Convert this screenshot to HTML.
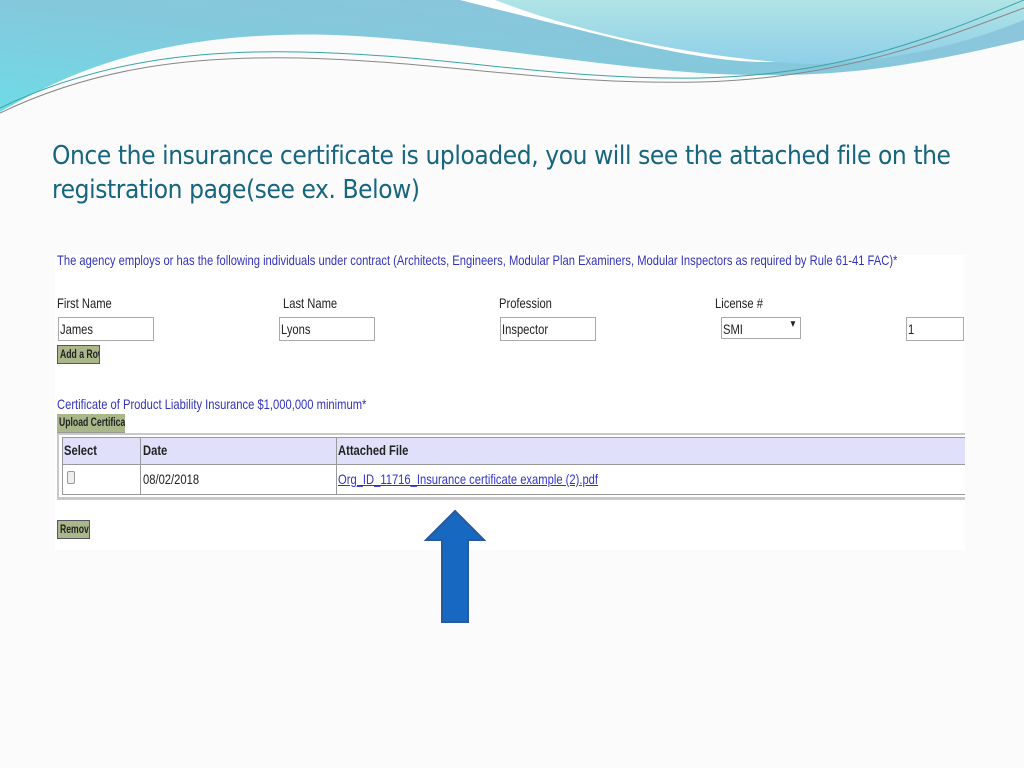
<!DOCTYPE html>
<html><head><style>
body{margin:0;width:1024px;height:768px;background:#fbfbfb;position:relative;overflow:hidden;font-family:"Liberation Sans",sans-serif}
.t{position:absolute;left:52px;top:139px;font-size:26px;line-height:34px;color:#17657f;font-family:"DejaVu Sans Condensed","Liberation Sans",sans-serif;letter-spacing:-0.4px;white-space:nowrap}
.shot{position:absolute;left:55px;top:255px;width:910px;height:295px;background:#fff;overflow:hidden}
.a{position:absolute;font-size:13px;color:#222;transform:scaleX(.8);transform-origin:left top;white-space:nowrap}
.inp{position:absolute;border:1px solid #aaa;height:22px;background:#fff}
.btn{position:absolute;background:#a9b78a;border:1px solid #556;font-size:12px;font-weight:bold;color:#222;padding:0 2px;white-space:nowrap;overflow:hidden;box-sizing:border-box;line-height:16px}
.btn span{display:inline-block;transform:scaleX(.72);transform-origin:left}
</style></head><body>
<svg width="1024" height="120" style="position:absolute;left:0;top:0">
<defs><linearGradient id="g" x1="0" y1="1" x2="1" y2="0"><stop offset="0" stop-color="#6fdbe6"/><stop offset=".5" stop-color="#84c8dc"/><stop offset="1" stop-color="#8fc4dc"/></linearGradient>
<linearGradient id="h" x1="0" y1="0" x2="0" y2="1"><stop offset="0" stop-color="#b0e4e6"/><stop offset="1" stop-color="#8fcfe8"/></linearGradient></defs>
<path d="M0 0H1024V40C900 70 820 80 700 73C550 62 400 30 280 35C120 40 40 90 0 112Z" fill="url(#g)"/>
<path d="M460 0H1024V10C930 45 860 62 760 62C690 60 620 40 460 0Z" fill="#fff"/>
<path d="M495 0H1024V20C950 50 880 62 810 64C720 60 600 40 495 0Z" fill="url(#h)"/>
<path d="M0 108C100 60 200 50 300 52C450 55 550 80 700 78C850 75 950 30 1024 0" stroke="#3aa5a5" fill="none" stroke-width="1"/>
<path d="M0 113C100 65 200 56 300 58C450 62 550 85 700 82C850 78 950 35 1024 8" stroke="#888" fill="none" stroke-width="1"/>
</svg>
<div class="t">Once the insurance certificate is uploaded, you will see the attached file on the<br>registration page(see ex. Below)</div>
<div class="shot">
<div class="a" style="left:2px;top:-3px;color:#3333bb;font-size:14px">The agency employs or has the following individuals under contract (Architects, Engineers, Modular Plan Examiners, Modular Inspectors as required by Rule 61-41 FAC)*</div>
<div class="a" style="left:2px;top:40px;font-size:14px">First Name</div>
<div class="a" style="left:228px;top:40px;font-size:14px">Last Name</div>
<div class="a" style="left:444px;top:40px;font-size:14px">Profession</div>
<div class="a" style="left:660px;top:40px;font-size:14px">License #</div>
<div class="inp" style="left:3px;top:62px;width:94px"></div><div class="a" style="left:5px;top:66px;font-size:14px">James</div>
<div class="inp" style="left:224px;top:62px;width:94px"></div><div class="a" style="left:226px;top:66px;font-size:14px">Lyons</div>
<div class="inp" style="left:445px;top:62px;width:94px"></div><div class="a" style="left:447px;top:66px;font-size:14px">Inspector</div>
<div class="inp" style="left:666px;top:62px;width:78px;height:20px"></div><div class="a" style="left:668px;top:66px;font-size:14px">SMI</div><div class="a" style="left:734px;top:64px;font-size:10px">▼</div>
<div class="inp" style="left:851px;top:62px;width:56px"></div><div class="a" style="left:853px;top:66px;font-size:14px">1</div>
<div class="btn" style="left:2px;top:90px;width:43px;height:19px"><span>Add a Row</span></div>
<div class="a" style="left:2px;top:141px;color:#3333bb;font-size:14px">Certificate of Product Liability Insurance $1,000,000 minimum*</div>
<div class="btn" style="left:2px;top:159px;width:68px;height:19px;border:none;border-bottom:1px solid #999"><span>Upload Certificate</span></div>
<div style="position:absolute;left:2px;top:178px;width:908px;height:62px;border:2px solid #c8c8c8;border-right:none;border-bottom:3px solid #c8c8c8"></div>
<div style="position:absolute;left:7px;top:182px;width:903px;height:56px;border:1px solid #999;border-right:none">
<div style="height:26px;background:#e0e0fb;border-bottom:1px solid #999"></div>
<div style="position:absolute;left:77px;top:0;width:1px;height:56px;background:#999"></div>
<div style="position:absolute;left:273px;top:0;width:1px;height:56px;background:#999"></div>
</div>
<div class="a" style="left:9px;top:187px;font-weight:bold;font-size:14px">Select</div>
<div class="a" style="left:88px;top:187px;font-weight:bold;font-size:14px">Date</div>
<div class="a" style="left:283px;top:187px;font-weight:bold;font-size:14px">Attached File</div>
<div style="position:absolute;left:12px;top:216px;width:6px;height:11px;border:1px solid #999;border-radius:2px;background:#eee"></div>
<div class="a" style="left:88px;top:216px;font-size:14px">08/02/2018</div>
<div class="a" style="left:283px;top:216px;color:#3333cc;text-decoration:underline;font-size:14px">Org_ID_11716_Insurance certificate example (2).pdf</div>
<div class="btn" style="left:2px;top:265px;width:33px;height:19px"><span>Remove</span></div>
</div>
<svg width="64" height="116" style="position:absolute;left:423px;top:509px"><path d="M32 2L61 31H45V113H19V31H3Z" fill="#1668c0" stroke="#2a5a9a" stroke-width="2"/></svg>
</body></html>
